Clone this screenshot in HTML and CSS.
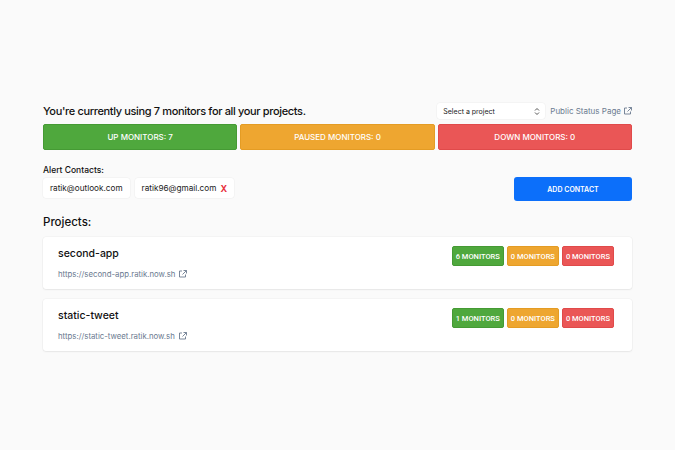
FILE: index.html
```html
<!DOCTYPE html>
<html>
<head>
<meta charset="utf-8">
<link rel="stylesheet" href="styles.css">
</head>
<body>
<div class="page">
  <div class="top">
    <h1 class="title">You're currently using 7 monitors for all your projects.</h1>
    <div class="tools">
      <div class="select">Select a project
        <svg class="caret" width="6" height="9" viewBox="0 0 6 9"><path d="M1 3.5 3 1.5 5 3.5M1 5.5 3 7.5 5 5.5" fill="none" stroke="#555" stroke-width="1"/></svg>
      </div>
      <a class="status-link">Public Status Page
        <svg class="ext" width="8" height="8" viewBox="0 0 8 8"><path d="M6.5 4.5v2.5h-6v-6h2.5M4.5 0.5h3v3M7.5 0.5 3.5 4.5" fill="none" stroke="#6b7a90" stroke-width="0.9"/></svg>
      </a>
    </div>
  </div>
  <div class="stats">
    <div class="stat up">UP MONITORS: 7</div>
    <div class="stat paused">PAUSED MONITORS: 0</div>
    <div class="stat down">DOWN MONITORS: 0</div>
  </div>
  <div class="contacts-row">
    <div class="contacts">
      <div class="label">Alert Contacts:</div>
      <div class="chips">
        <div class="chip">ratik@outlook.com</div>
        <div class="chip">ratik96@gmail.com <span class="x">X</span></div>
      </div>
    </div>
    <button class="add">ADD CONTACT</button>
  </div>
  <h2 class="projects-title">Projects:</h2>
  <div class="card">
    <div class="card-info">
      <div class="card-name">second-app</div>
      <div class="card-url">https://second-app.ratik.now.sh
        <svg class="ext" width="8" height="8" viewBox="0 0 8 8"><path d="M6.5 4.5v2.5h-6v-6h2.5M4.5 0.5h3v3M7.5 0.5 3.5 4.5" fill="none" stroke="#6b7a90" stroke-width="0.9"/></svg>
      </div>
    </div>
    <div class="badges">
      <span class="badge up">6 MONITORS</span>
      <span class="badge paused">0 MONITORS</span>
      <span class="badge down">0 MONITORS</span>
    </div>
  </div>
  <div class="card">
    <div class="card-info">
      <div class="card-name">static-tweet</div>
      <div class="card-url">https://static-tweet.ratik.now.sh
        <svg class="ext" width="8" height="8" viewBox="0 0 8 8"><path d="M6.5 4.5v2.5h-6v-6h2.5M4.5 0.5h3v3M7.5 0.5 3.5 4.5" fill="none" stroke="#6b7a90" stroke-width="0.9"/></svg>
      </div>
    </div>
    <div class="badges">
      <span class="badge up">1 MONITORS</span>
      <span class="badge paused">0 MONITORS</span>
      <span class="badge down">0 MONITORS</span>
    </div>
  </div>
</div>
</body>
</html>
```

FILE: styles.css
```css
html, body {
  margin: 0;
  padding: 0;
  background: #fafafa;
  font-family: Inter, "Noto Sans", sans-serif;
  color: #111;
}
.page {
  width: 589px;
  margin: 0 auto;
  padding-top: 102px;
}
.top {
  display: flex;
  justify-content: space-between;
  align-items: center;
  height: 18px;
}
.title {
  margin: 0;
  font-size: 11px;
  font-weight: 500;
  letter-spacing: -0.35px;
}
.tools {
  display: flex;
  align-items: center;
  gap: 5px;
}
.select {
  width: 97px;
  height: 16px;
  background: #fff;
  border-radius: 3px;
  font-size: 7px;
  display: flex;
  align-items: center;
  justify-content: space-between;
  padding: 0 5px 0 6px;
  color: #222;
  box-sizing: content-box;
  box-shadow: 0 0 0 0.5px #eee;
}
.status-link {
  font-size: 8px;
  color: #6b7a90;
  display: flex;
  align-items: center;
  gap: 3px;
}
.stats {
  display: flex;
  gap: 3px;
  margin-top: 4px;
}
.stat {
  flex: 1;
  height: 26px;
  border-radius: 2px;
  color: #fff;
  font-size: 8px;
  font-weight: 500;
  display: flex;
  align-items: center;
  justify-content: center;
  box-sizing: border-box;
}
.up { background: #4fa83d; border: 1px solid #459a34; }
.paused { background: #eea630; border: 1px solid #e49c24; }
.down { background: #ea5656; border: 1px solid #e04a4a; }
.contacts-row {
  display: flex;
  justify-content: space-between;
  align-items: flex-end;
  margin-top: 15px;
}
.label {
  font-size: 8.5px;
  font-weight: 500;
  margin-bottom: 3px;
}
.chips {
  display: flex;
  gap: 5px;
}
.chip {
  background: #fff;
  border-radius: 3px;
  height: 20px;
  padding: 0 7px 0 7px;
  font-size: 8.2px;
  display: flex;
  align-items: center;
  gap: 4px;
  color: #222;
  box-shadow: 0 0 0 0.5px #eee;
}
.x {
  color: #e8323c;
  font-weight: 700;
  font-size: 9px;
}
.add {
  width: 118px;
  height: 24px;
  border: none;
  border-radius: 3px;
  background: #0c6ffa;
  color: #fff;
  font-family: Inter, sans-serif;
  font-size: 7px;
  font-weight: 600;
  margin-bottom: -3px;
}
.projects-title {
  margin: 17px 0 8px;
  font-size: 11.5px;
  font-weight: 500;
}
.card {
  background: #fff;
  border-radius: 3px;
  box-shadow: 0 1px 2px rgba(0,0,0,0.06), 0 0 0 0.5px #eee;
  height: 52px;
  display: flex;
  justify-content: space-between;
  align-items: flex-start;
  padding: 0 18px 0 15px;
  box-sizing: border-box;
  margin-bottom: 10px;
}
.card-info {
  padding-top: 10px;
}
.card-name {
  font-size: 10.5px;
  font-weight: 500;
  line-height: 14px;
}
.card-url {
  margin-top: 8px;
  font-size: 7.8px;
  color: #6b7a90;
  display: flex;
  align-items: center;
  gap: 4px;
}
.badges {
  display: flex;
  gap: 3px;
  padding-top: 9px;
}
.badge {
  height: 20px;
  padding: 0 3px;
  font-family: Roboto, sans-serif;
  font-size: 7.5px;
  font-weight: 500;
  color: #fff;
  border-radius: 2px;
  display: flex;
  align-items: center;
  box-sizing: border-box;
}
```
